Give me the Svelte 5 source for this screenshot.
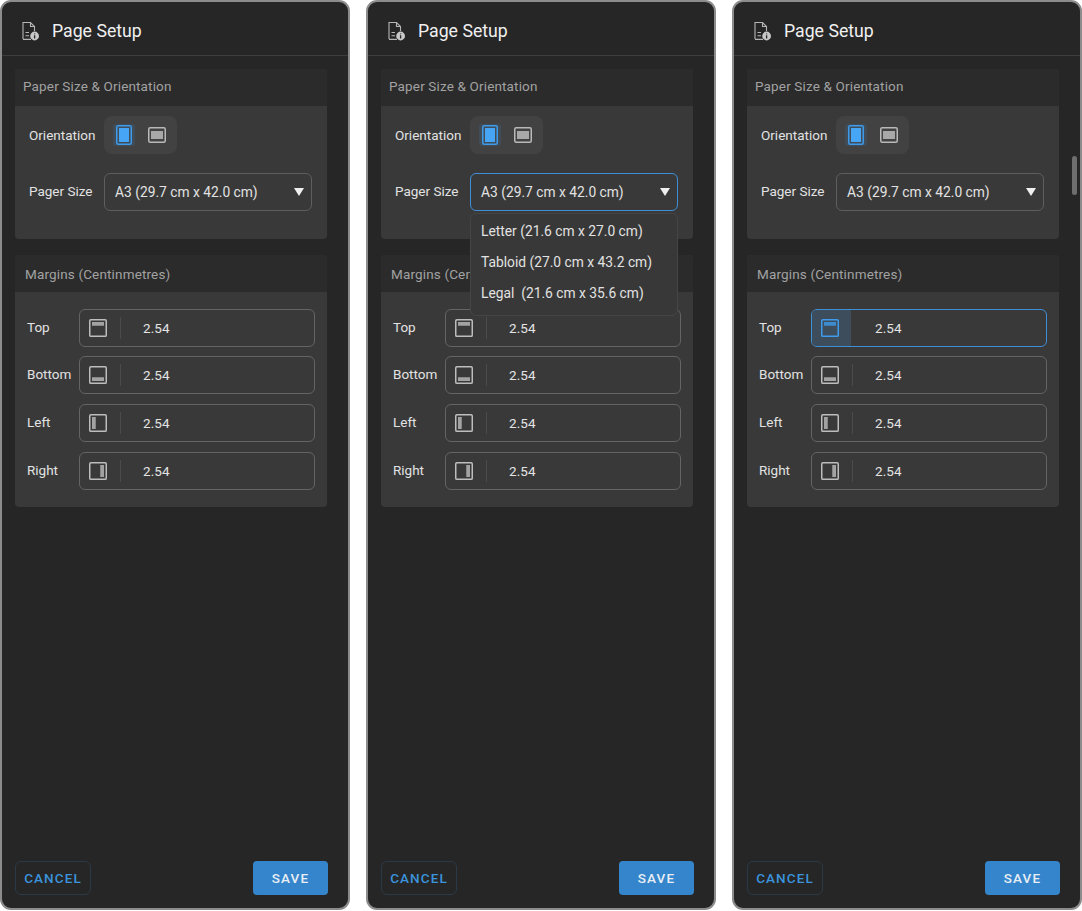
<script>
	const margins = [
		{ label: 'Top', bar: { x: 5, y: 5, w: 14, h: 3 } },
		{ label: 'Bottom', bar: { x: 5, y: 16, w: 14, h: 3 } },
		{ label: 'Left', bar: { x: 5, y: 5, w: 3, h: 14 } },
		{ label: 'Right', bar: { x: 16, y: 5, w: 3, h: 14 } }
	]
	const sizes = ['Letter (21.6 cm x 27.0 cm)', 'Tabloid (27.0 cm x 43.2 cm)', 'Legal\u00a0 (21.6 cm x 35.6 cm)']

	const panels = [
		{ open: false, focused: null, scroll: false },
		{ open: true, focused: null, scroll: false },
		{ open: false, focused: 'Top', scroll: true }
	]
</script>

<main class="page">
	{#each panels as panel}
		<section class="panel">
			<header class="head">
				<svg class="head-icon" viewBox="0 0 20 20" width="20" height="20" fill="none">
					<path d="M3 18V1.5h7.5L14.5 5.5V10" stroke="#b5b5b5" stroke-width="1.1" />
					<path d="M10.5 1.5V5.5H14.5" stroke="#b5b5b5" stroke-width="1.1" />
					<path d="M3 18.4H11M5.5 11.5H9M5.5 14.8H9" stroke="#b5b5b5" stroke-width="1.1" />
					<circle cx="14.6" cy="15" r="4.4" fill="#c9c9c9" />
					<path d="M14.6 14.2V17.4M14.6 12.4V13.3" stroke="#262626" stroke-width="1.3" />
				</svg>
				<h1>Page Setup</h1>
			</header>

			<div class="card first">
				<h2>Paper Size &amp; Orientation</h2>
				<div class="card-body paper">
					<div class="row orient">
						<span class="label">Orientation</span>
						<div class="toggle">
							<span class="toggle-btn active">
								<svg viewBox="0 0 16 20" width="16" height="20" fill="none">
									<rect x="0.75" y="0.75" width="14.5" height="18.5" rx="1.5" stroke="#3d9be9" stroke-width="1.5" />
									<rect x="3" y="3" width="10" height="14" fill="#46a6f5" />
								</svg>
							</span>
							<span class="toggle-btn">
								<svg viewBox="0 0 18 16" width="18" height="16" fill="none">
									<rect x="0.75" y="0.75" width="16.5" height="14.5" rx="1.5" stroke="#b9b9b9" stroke-width="1.5" />
									<rect x="3" y="4" width="12" height="8" fill="#a8a8a8" />
								</svg>
							</span>
						</div>
					</div>
					<div class="row size">
						<span class="label">Pager Size</span>
						<div class="select-wrap">
							<div class="select" class:open={panel.open}>
								<span>A3 (29.7 cm x 42.0 cm)</span>
								<i class="caret"></i>
							</div>
							{#if panel.open}
								<ul class="menu">
									{#each sizes as size}
										<li>{size}</li>
									{/each}
								</ul>
							{/if}
						</div>
					</div>
				</div>
			</div>

			<div class="card">
				<h2 class="margins-title">Margins (Centinmetres)</h2>
				<div class="card-body margins">
					{#each margins as m}
						<div class="margin-row">
							<span class="label margin-label">{m.label}</span>
							<div class="field" class:focused={panel.focused === m.label}>
								<span class="field-icon">
									<svg viewBox="0 0 24 24" width="18" height="18" fill="none">
										<rect x="1" y="1" width="22" height="22" rx="1.5" stroke="currentColor" stroke-width="2" />
										<rect x={m.bar.x - 1} y={m.bar.y - 1} width={m.bar.w + 2} height={m.bar.h + 2} fill="currentColor" opacity="0.8" />
									</svg>
								</span>
								<span class="value">2.54</span>
							</div>
						</div>
					{/each}
				</div>
			</div>

			<footer class="foot">
				<button class="cancel">CANCEL</button>
				<button class="save">SAVE</button>
			</footer>

			{#if panel.scroll}
				<div class="scrollbar"></div>
			{/if}
		</section>
	{/each}
</main>

<style>
	:global(body) {
		background: #fff;
	}

	.page {
		display: flex;
		gap: 16px;
		width: 1082px;
		height: 911px;
		font-family: Roboto, "Liberation Sans", sans-serif;
		color: #e4e4e4;
	}

	.panel {
		position: relative;
		display: flex;
		flex-direction: column;
		box-sizing: border-box;
		width: 350px;
		height: 910px;
		background: #262626;
		border: 2px solid #8c8c8c;
		border-radius: 11px;
	}

	.head {
		display: flex;
		align-items: center;
		flex: none;
		box-sizing: border-box;
		height: 54px;
		padding: 4px 0 0 18px;
		border-bottom: 1px solid #3d3d3d;
	}

	.head-icon {
		margin-right: 12px;
	}

	h1 {
		margin: 0;
		font-size: 17.7px;
		font-weight: 400;
		color: #f0f0f0;
	}

	.card {
		flex: none;
		width: 312px;
		margin: 0 0 16px 13px;
		border-radius: 4px;
		overflow: visible;
		background: #393939;
	}

	.card.first {
		margin-top: 13px;
	}

	h2 {
		margin: 0;
		box-sizing: border-box;
		height: 37px;
		padding: 0 8px;
		line-height: 35px;
		font-size: 13.5px;
		font-weight: 400;
		letter-spacing: 0.15px;
		color: #a2a2a2;
		background: #2b2b2b;
		border-radius: 4px 4px 0 0;
	}

	.margins-title {
		padding-left: 10px;
		line-height: 39px;
	}

	.paper {
		height: 133px;
		box-sizing: border-box;
		padding: 10px 15px 0 14px;
	}

	.row {
		display: flex;
		align-items: center;
	}

	.label {
		font-size: 13.5px;
		letter-spacing: 0;
		color: #e2e2e2;
	}

	.orient .label,
	.size .label {
		width: 75px;
		flex: none;
	}

	.size .label {
		position: relative;
		top: -1px;
	}

	.toggle {
		display: flex;
		align-items: center;
		gap: 11px;
		box-sizing: border-box;
		width: 73px;
		height: 38px;
		padding: 0 9px;
		background: #424242;
		border-radius: 8px;
	}

	.toggle-btn {
		display: flex;
		align-items: center;
		justify-content: center;
		width: 22px;
		height: 22px;
	}

	.toggle-btn.active {
		background: #404c58;
		border-radius: 3px;
	}

	.size {
		margin-top: 19px;
	}

	.select-wrap {
		position: relative;
		flex: none;
		width: 208px;
	}

	.select {
		display: flex;
		align-items: center;
		justify-content: space-between;
		box-sizing: border-box;
		height: 38px;
		padding: 0 7px 0 10px;
		border: 1px solid #5e5e5e;
		border-radius: 6px;
		font-size: 13.8px;
		color: #e2e2e2;
	}

	.select.open {
		border-color: #3f8fd6;
	}

	.caret {
		width: 0;
		height: 0;
		border-left: 5px solid transparent;
		border-right: 5px solid transparent;
		border-top: 8px solid #efefef;
	}

	.menu {
		position: absolute;
		z-index: 2;
		top: 38px;
		left: 0;
		width: 100%;
		box-sizing: border-box;
		margin: 2px 0 0;
		padding: 2px 10px 6px;
		list-style: none;
		background: #383838;
		border: 1px solid #454545;
		border-radius: 6px;
	}

	.menu li {
		height: 31px;
		line-height: 31px;
		font-size: 13.8px;
		color: #e2e2e2;
	}

	.margins {
		padding: 16.5px 12px 17px;
		display: flex;
		flex-direction: column;
		gap: 9.7px;
	}

	.margin-row {
		display: flex;
		align-items: center;
	}

	.margin-label {
		width: 52px;
		flex: none;
		position: relative;
		top: -1px;
	}

	.field {
		display: flex;
		align-items: center;
		box-sizing: border-box;
		width: 237px;
		height: 38px;
		border: 1px solid #646464;
		border-radius: 6px;
		overflow: hidden;
		color: #bdbdbd;
	}

	.field-icon {
		display: flex;
		align-items: center;
		justify-content: center;
		flex: none;
		box-sizing: border-box;
		width: 41px;
		height: 100%;
		padding-right: 5px;
		position: relative;
	}

	.field-icon::after {
		content: '';
		position: absolute;
		right: 0;
		top: 7px;
		bottom: 7px;
		width: 1px;
		background: #4b4b4b;
	}

	.field.focused {
		border-color: #3f8fd6;
		color: #3f9ced;
	}

	.field.focused .field-icon {
		background: #3d4d5c;
		width: 39px;
		padding-right: 3px;
		margin-right: 2px;
	}

	.field.focused .field-icon::after {
		display: none;
	}

	.value {
		margin-left: 22px;
		font-size: 13.5px;
		letter-spacing: 0.1px;
		color: #e4e4e4;
	}

	.foot {
		display: flex;
		justify-content: space-between;
		align-items: center;
		margin-top: auto;
		padding: 0 20px 13px 13px;
	}

	button {
		box-sizing: border-box;
		height: 34px;
		font-family: inherit;
		font-size: 13.5px;
		font-weight: 500;
		letter-spacing: 1.1px;
		border-radius: 4px;
	}

	.cancel {
		width: 76px;
		padding: 0;
		color: #3a93dc;
		background: none;
		border: 1px solid #2c3a47;
		border-radius: 6px;
	}

	.save {
		width: 75px;
		padding: 0;
		color: #e8eef4;
		background: #3585cc;
		border: none;
	}

	.scrollbar {
		position: absolute;
		top: 154px;
		right: 3px;
		width: 5px;
		height: 39px;
		background: #6e6e6e;
		border-radius: 3px;
	}
</style>
